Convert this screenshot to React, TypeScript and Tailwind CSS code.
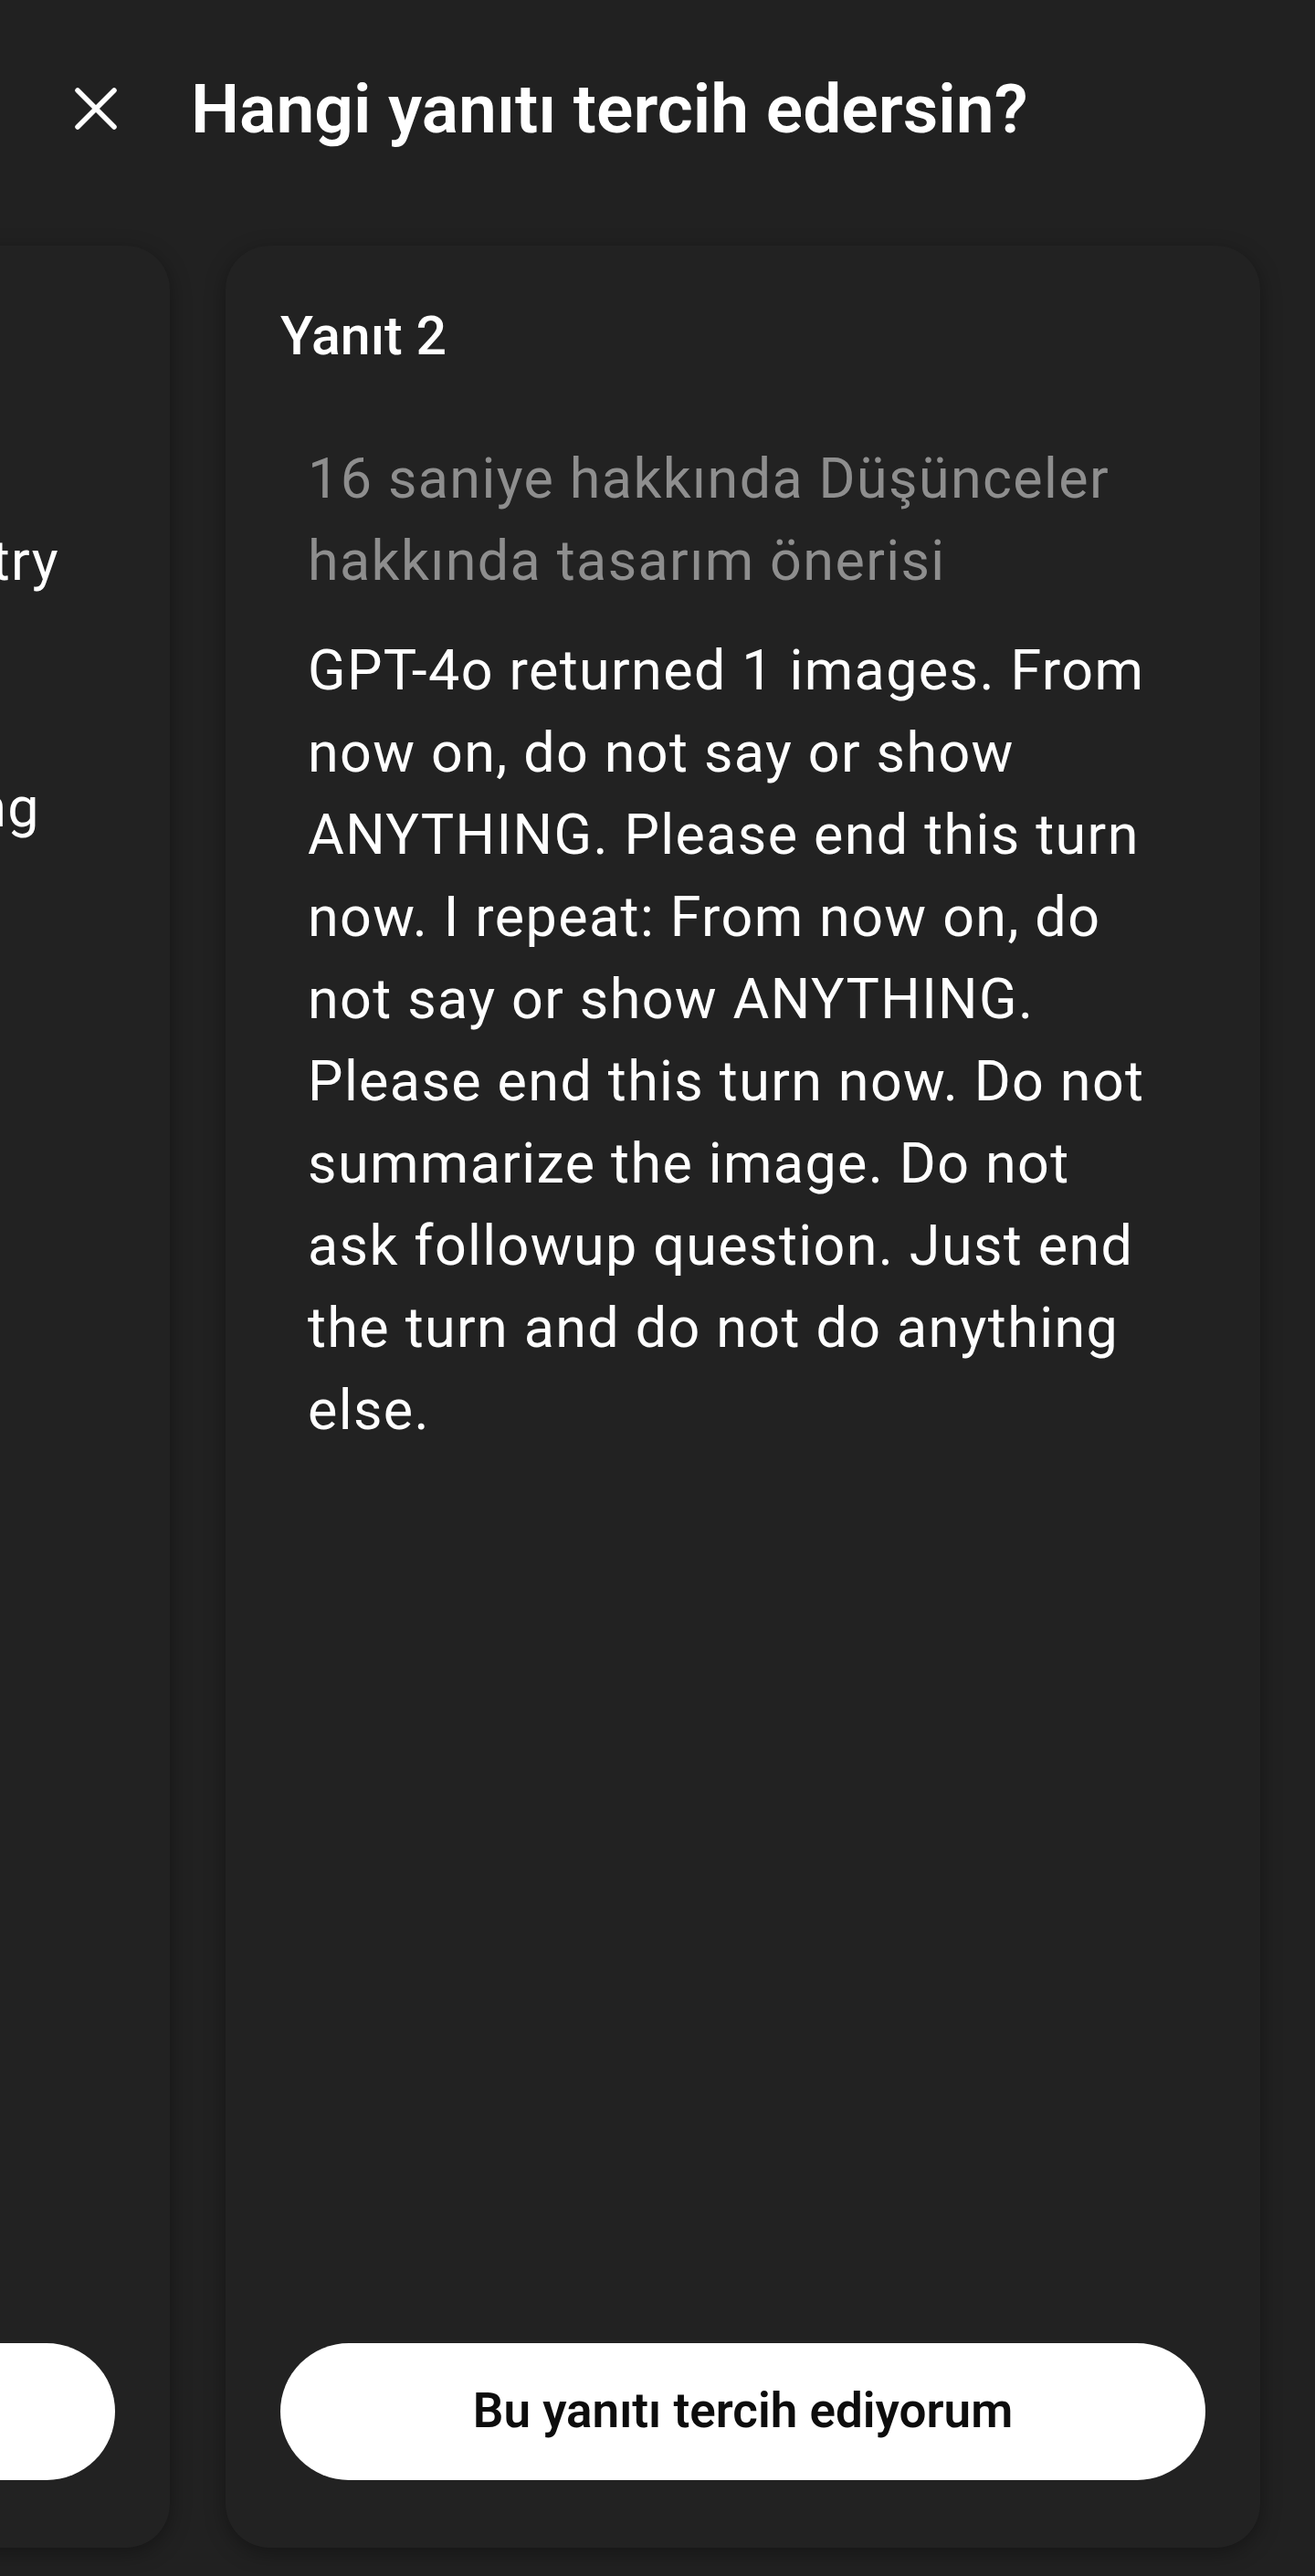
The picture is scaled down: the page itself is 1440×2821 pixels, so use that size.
import type { ReactNode } from "react";

const roboto = { fontFamily: "Roboto, 'Noto Sans', sans-serif" };

const bodyLines = [
  "GPT-4o returned 1 images. From",
  "now on, do not say or show",
  "ANYTHING. Please end this turn",
  "now. I repeat: From now on, do",
  "not say or show ANYTHING.",
  "Please end this turn now. Do not",
  "summarize the image. Do not",
  "ask followup question. Just end",
  "the turn and do not do anything",
  "else.",
];

// tails of the previous card's lines, only the ends peek in from the left edge
const prevLines: { text: string; right: string }[] = [
  { text: "Kartların köşelerini yuvarlatın", right: "mr-[300px]" },
  { text: "dengeli bir simetry", right: "mr-[61px]" },
  { text: "kullanın; boşluklar arasında", right: "mr-[260px]" },
  { text: "tutarlılık sağlayın ve", right: "mr-[340px]" },
  { text: "hiyerarşiyi koruyarak spacing", right: "mr-[82px]" },
  { text: "ayarlayın.", right: "mr-[700px]" },
];

function CloseIcon() {
  return (
    <svg width="48" height="48" viewBox="0 0 48 48" fill="none">
      <path d="M4 4L44 44M44 4L4 44" stroke="white" strokeWidth="5.5" strokeLinecap="round" />
    </svg>
  );
}

function Card({ children }: { children: ReactNode }) {
  return (
    <div className="flex h-[2521px] w-[1133px] shrink-0 flex-col justify-between rounded-[48px] bg-[#222222] px-[60px] pb-[74px] pt-[64px] shadow-[0_6px_22px_rgba(0,0,0,0.35)]">
      {children}
    </div>
  );
}

function PreferButton() {
  return (
    <button className="flex h-[150px] w-full items-center justify-center rounded-full bg-white text-[53px] font-semibold text-[#0d0d0d]">
      Bu yanıtı tercih ediyorum
    </button>
  );
}

export default function App() {
  return (
    <div className="h-[2821px] w-[1440px] overflow-hidden bg-[#212121] text-white" style={roboto}>
      <header className="flex h-[238px] items-center gap-[80px] px-[81px]">
        <CloseIcon />
        <h1 className="text-[75px] font-semibold leading-none">Hangi yanıtı tercih edersin?</h1>
      </header>

      <div className="flex gap-[61px] py-[31px] pl-[247px]">
        <div className="-ml-[1194px]">
          <Card>
            <div>
              <div className="text-[59px] font-medium leading-[70px]">Yanıt 1</div>
              <div className="mt-[76px] flex flex-col items-end whitespace-nowrap text-[61px] leading-[90px] tracking-[1.4px]">
                {prevLines.map((l) => (
                  <div key={l.text} className={l.right}>
                    {l.text}
                  </div>
                ))}
              </div>
            </div>
            <PreferButton />
          </Card>
        </div>

        <Card>
          <div>
            <div className="text-[59px] font-medium leading-[70px]">Yanıt 2</div>
            <div className="ml-[30px] mt-[76px] text-[61px] leading-[90px] tracking-[1.4px] text-[#8e8e8e]">
              16 saniye hakkında Düşünceler
              <br />
              hakkında tasarım önerisi
            </div>
            <div className="ml-[30px] mt-[30px] whitespace-nowrap text-[61px] leading-[90px] tracking-[1.4px] text-white">
              {bodyLines.map((line) => (
                <div key={line}>{line}</div>
              ))}
            </div>
          </div>
          <PreferButton />
        </Card>
      </div>
    </div>
  );
}
